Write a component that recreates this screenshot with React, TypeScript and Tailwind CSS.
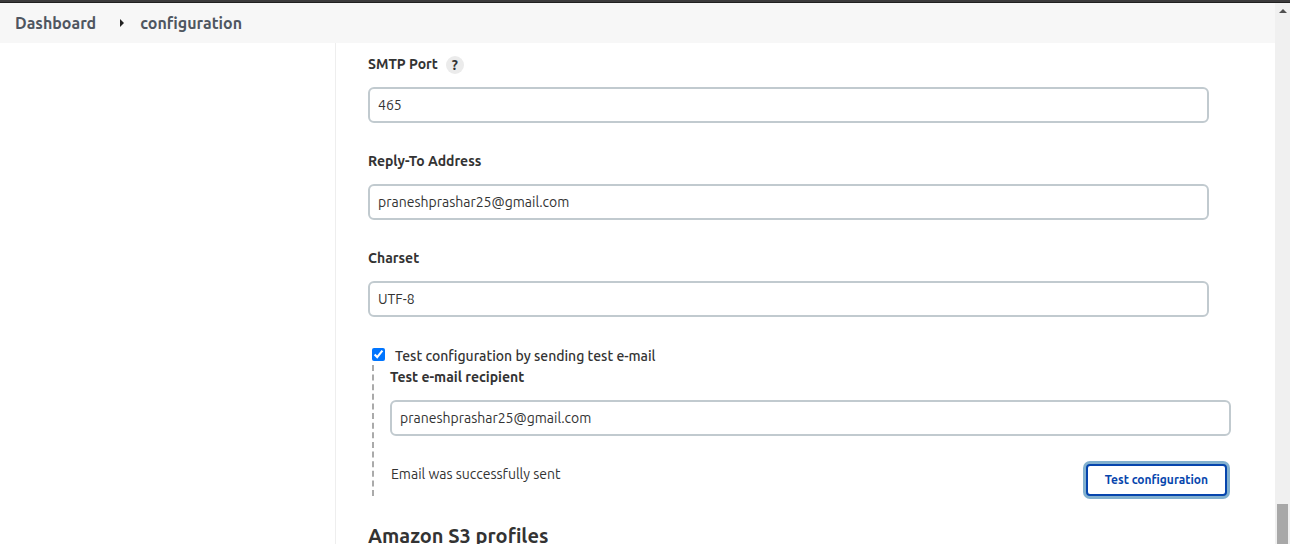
import { useState } from 'react';

type FieldProps = {
  id: string;
  label: string;
  initial: string;
  type?: string;
  help?: boolean;
};

function Field({ id, label, initial, type = 'text', help = false }: FieldProps) {
  const [value, setValue] = useState(initial);
  return (
    <div className="flex flex-col gap-[11px]">
      <div className="flex h-6 items-center gap-2">
        <label htmlFor={id} className="text-sm leading-6 font-bold">
          {label}
        </label>
        {help && (
          <button
            type="button"
            aria-label={`Help for ${label}`}
            className="mt-0.5 flex size-[18px] items-center justify-center rounded-full bg-[#ebebeb] text-sm font-bold"
          >
            ?
          </button>
        )}
      </div>
      <input
        id={id}
        type={type}
        value={value}
        onChange={(e) => setValue(e.target.value)}
        className="h-9 w-full rounded-md border-2 border-[#c1cacf] bg-white px-2 text-sm outline-none"
      />
    </div>
  );
}

export default function App() {
  const [sendTest, setSendTest] = useState(true);
  return (
    <div className="flex h-screen flex-col overflow-hidden bg-white font-['Ubuntu','Noto_Sans',sans-serif] text-[#333333]">
      <div className="h-[3px] shrink-0 border-b border-[#202020] bg-[#3c3b3c]" />
      <div className="flex min-h-0 flex-1">
        <div className="flex min-w-0 flex-1 flex-col">
          <nav
            aria-label="Breadcrumb"
            className="flex h-10 shrink-0 items-center bg-[#f7f7f7] pl-[15px] text-base font-bold text-[#4f5660]"
          >
            <a href="#dashboard">Dashboard</a>
            <svg viewBox="0 0 4 8" className="mr-4 ml-6 h-2 w-1 fill-[#222222]" aria-hidden="true">
              <path d="M0 0 L4 4 L0 8 Z" />
            </svg>
            <a href="#configuration">configuration</a>
          </nav>
          <div className="flex min-h-0 flex-1">
            <aside className="w-[336px] shrink-0 border-r border-[#eeeeee]" />
            <main className="min-w-0 flex-1 overflow-hidden pt-[9px] pr-[66px] pl-8">
              <form onSubmit={(e) => e.preventDefault()}>
                <div className="flex flex-col gap-[26px]">
                  <Field id="smtp-port" label="SMTP Port" initial="465" help />
                  <Field id="reply-to" label="Reply-To Address" initial="praneshprashar25@gmail.com" type="email" />
                  <Field id="charset" label="Charset" initial="UTF-8" />
                  <div>
                    <div className="flex h-[22px] items-center gap-[10px] pl-1">
                      <input
                        id="send-test"
                        type="checkbox"
                        checked={sendTest}
                        onChange={(e) => setSendTest(e.target.checked)}
                        className="size-[13px] accent-[#0075ff]"
                      />
                      <label htmlFor="send-test" className="pt-1 text-sm leading-5 font-medium">
                        Test configuration by sending test e-mail
                      </label>
                    </div>
                    <div className="-mr-[22px] ml-1 border-l-2 border-dashed border-[#aaaaaa] pl-4">
                      <Field id="recipient" label="Test e-mail recipient" initial="praneshprashar25@gmail.com" type="email" />
                      <div className="flex items-start justify-between pt-7 pr-1 pl-px">
                        <p className="text-sm leading-5" role="status">
                          Email was successfully sent
                        </p>
                        <button
                          type="button"
                          className="h-8 rounded-sm border-2 border-[#0645ad] bg-white px-[17px] text-xs font-bold text-[#0645ad] ring-3 ring-[#82b0ce]"
                        >
                          Test configuration
                        </button>
                      </div>
                    </div>
                  </div>
                </div>
                <h2 className="mt-6 text-xl leading-8 font-bold">Amazon S3 profiles</h2>
              </form>
            </main>
          </div>
        </div>
        <div className="flex w-[15px] shrink-0 flex-col items-center justify-between bg-[#f0f0f0] pt-[6px]">
          <svg viewBox="0 0 8 4" className="h-1 w-2 fill-[#505050]" aria-hidden="true">
            <path d="M0 4 L4 0 L8 4 Z" />
          </svg>
          <div className="h-10 w-[11px] bg-[#a8a8a8]" />
        </div>
      </div>
    </div>
  );
}
